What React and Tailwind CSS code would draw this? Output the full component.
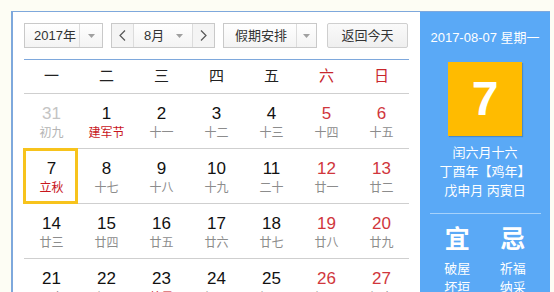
import React from 'react';

const weeks = [
    [
        { d: '31', l: '初九', dim: true },
        { d: '1', l: '建军节', fest: true },
        { d: '2', l: '十一' },
        { d: '3', l: '十二' },
        { d: '4', l: '十三' },
        { d: '5', l: '十四' },
        { d: '6', l: '十五' },
    ],
    [
        { d: '7', l: '立秋', fest: true, sel: true },
        { d: '8', l: '十七' },
        { d: '9', l: '十八' },
        { d: '10', l: '十九' },
        { d: '11', l: '二十' },
        { d: '12', l: '廿一' },
        { d: '13', l: '廿二' },
    ],
    [
        { d: '14', l: '廿三' },
        { d: '15', l: '廿四' },
        { d: '16', l: '廿五' },
        { d: '17', l: '廿六' },
        { d: '18', l: '廿七' },
        { d: '19', l: '廿八' },
        { d: '20', l: '廿九' },
    ],
    [
        { d: '21', l: '三十' },
        { d: '22', l: '七月' },
        { d: '23', l: '处暑', fest: true },
        { d: '24', l: '初三' },
        { d: '25', l: '初四' },
        { d: '26', l: '初五' },
        { d: '27', l: '初六' },
    ],
];

const Arrow = () => (
    <svg width="7" height="4" viewBox="0 0 7 4">
        <path d="M0 0 L7 0 L3.5 4 Z" fill="#a0a0a0" />
    </svg>
);

const Chevron = ({ dir }) => (
    <svg width="7" height="11" viewBox="0 0 7 11">
        <path
            d={dir === 'left' ? 'M6 0.5 L1 5.5 L6 10.5' : 'M1 0.5 L6 5.5 L1 10.5'}
            fill="none"
            stroke="#555"
            strokeWidth="1.2"
        />
    </svg>
);

const DayCell = ({ day, col }) => {
    const weekend = col >= 5;
    let numColor = 'text-[#111]';
    if (day.dim) numColor = 'text-[#c4c4c4]';
    else if (weekend) numColor = 'text-[#d0363c]';

    let lunarColor = 'text-[#8c8c8c]';
    if (day.dim) lunarColor = 'text-[#b4b4b4]';
    if (day.fest) lunarColor = 'text-[#c8161d]';

    return (
        <div className="relative flex-1 flex flex-col items-center pt-[10px]">
            {day.sel && (
                <div className="absolute left-[-1px] top-[-1px] w-[55px] h-[56px] border-[3px] border-[#f7c31c]" />
            )}
            <div className={`text-[17px] leading-[20px] ${numColor}`}>{day.d}</div>
            <div className={`text-[12px] leading-[18px] ${lunarColor}`}>{day.l}</div>
        </div>
    );
};

const App = () => {
    const weekdays = ['一', '二', '三', '四', '五', '六', '日'];

    return (
        <div
            className="w-[554px] h-[292px] overflow-hidden bg-[#fdfdf4] pt-[11px] pl-[11px] pr-[4px]"
            style={{ fontFamily: '"Liberation Sans", "Noto Sans CJK SC", sans-serif' }}
        >
            <div className="flex h-[300px] bg-white border-t border-l-2 border-[#7ea8dc]">
                {/* calendar */}
                <div className="w-[407px] px-[11px] pt-[11px]">
                    <div className="flex h-[25px] text-[13px] text-[#333]">
                        <div className="flex w-[79px] border border-[#c9c9c9] bg-gradient-to-b from-white to-[#f3f3f3]">
                            <div className="flex-1 flex items-center pl-[9px]">2017年</div>
                            <div className="w-[23px] flex items-center justify-center border-l border-[#dcdcdc]">
                                <Arrow />
                            </div>
                        </div>
                        <div className="flex w-[104px] ml-[8px] border border-[#c9c9c9] bg-gradient-to-b from-white to-[#f3f3f3]">
                            <div className="w-[22px] flex items-center justify-center bg-[#f4f4f4] border-r border-[#dcdcdc]">
                                <Chevron dir="left" />
                            </div>
                            <div className="flex-1 flex items-center justify-between pl-[10px] pr-[9px]">
                                <span>8月</span>
                                <Arrow />
                            </div>
                            <div className="w-[22px] flex items-center justify-center bg-[#f4f4f4] border-l border-[#dcdcdc]">
                                <Chevron dir="right" />
                            </div>
                        </div>
                        <div className="flex w-[94px] ml-[8px] border border-[#c9c9c9] bg-gradient-to-b from-white to-[#f3f3f3]">
                            <div className="flex-1 flex items-center pl-[11px]">假期安排</div>
                            <div className="w-[20px] flex items-center justify-center border-l border-[#dcdcdc]">
                                <Arrow />
                            </div>
                        </div>
                        <div className="flex w-[81px] ml-[10px] items-center justify-center rounded-[2px] border border-[#cfcfcf] bg-gradient-to-b from-[#fafafa] to-[#efefef]">
                            返回今天
                        </div>
                    </div>

                    <div className="h-px mt-[11px] bg-[#7ea8dc]" />

                    <div className="flex h-[34px] border-b border-[#cfcfcf] text-[15px]">
                        {weekdays.map((w, i) => (
                            <div
                                key={w}
                                className={`flex-1 flex items-center justify-center ${i >= 5 ? 'text-[#c8262c]' : 'text-[#222]'}`}
                            >
                                {w}
                            </div>
                        ))}
                    </div>

                    {weeks.map((week, r) => (
                        <div key={r} className="flex h-[55px] border-b border-[#cfcfcf]">
                            {week.map((day, c) => (
                                <DayCell key={c} day={day} col={c} />
                            ))}
                        </div>
                    ))}
                </div>

                {/* today panel */}
                <div className="w-[130px] bg-[#5aa9f6] flex flex-col items-center pt-[16px] text-white">
                    <div className="text-[13px] leading-[20px]">2017-08-07 星期一</div>
                    <div className="mt-[14px] w-[74px] h-[74px] bg-[#ffbb00] shadow-[1px_1px_1px_rgba(0,0,0,0.18)] flex items-center justify-center text-[48px] font-bold leading-none">
                        7
                    </div>
                    <div className="mt-[7px] text-[13px] leading-[19px] text-center">
                        <div>闰六月十六</div>
                        <div>丁酉年【鸡年】</div>
                        <div>戊申月 丙寅日</div>
                    </div>
                    <div className="mt-[13px] w-[111px] h-px bg-[#a6d2fb]" />
                    <div className="flex w-[111px]">
                        {[
                            { t: '宜', a: ['破屋', '坏垣'] },
                            { t: '忌', a: ['祈福', '纳采'] },
                        ].map((g) => (
                            <div key={g.t} className="flex-1 flex flex-col items-center">
                                <div className="mt-[11px] text-[25px] leading-[28px] font-semibold">{g.t}</div>
                                <div className="mt-[6px] text-[13px] leading-[19px] text-center">
                                    {g.a.map((x) => (
                                        <div key={x}>{x}</div>
                                    ))}
                                </div>
                            </div>
                        ))}
                    </div>
                </div>
            </div>
        </div>
    );
};

export default App;
